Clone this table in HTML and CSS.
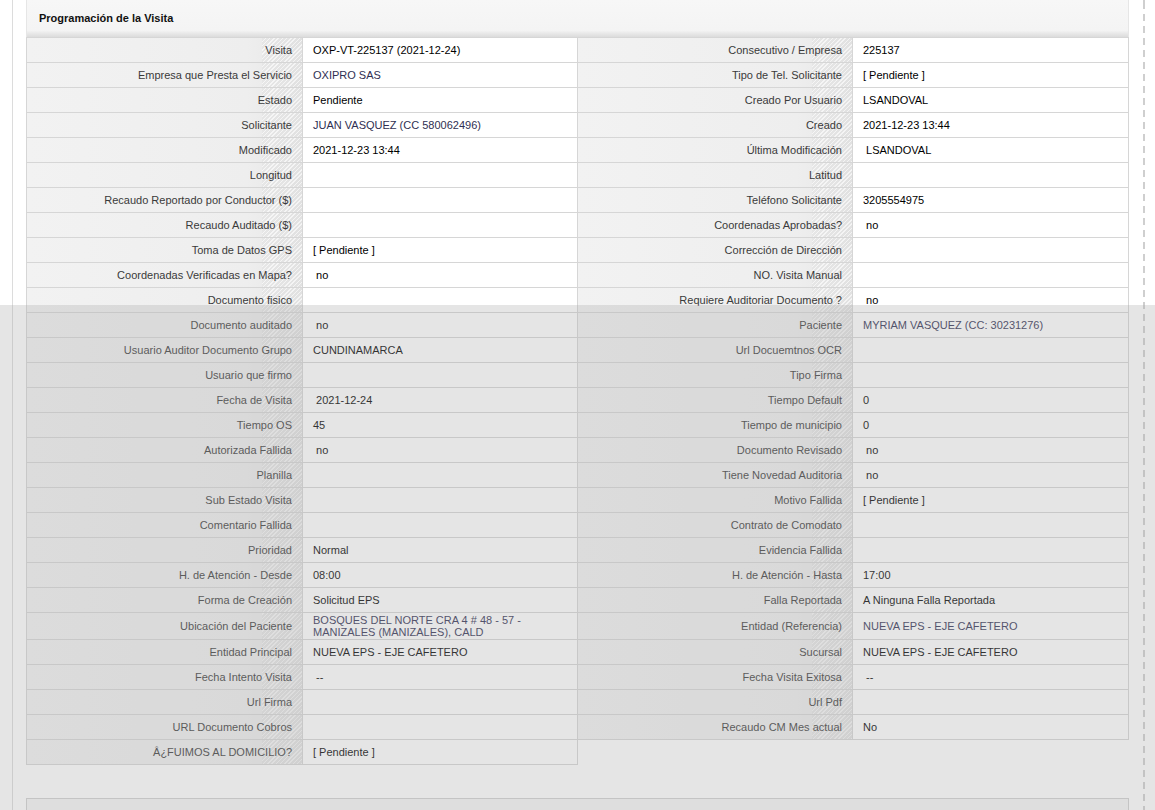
FILE: index.html
```html
<!DOCTYPE html>
<html lang="es">
<head>
<meta charset="utf-8">
<title>Programación de la Visita</title>
<link rel="stylesheet" href="styles.css">
</head>
<body>
<div class="page">
  <div class="main">
    <div class="panel-head">Programación de la Visita</div>
    <div class="grid">
      <div class="lbl">Visita</div><div class="val">OXP-VT-225137 (2021-12-24)</div>
      <div class="lbl">Consecutivo / Empresa</div><div class="val">225137</div>

      <div class="lbl">Empresa que Presta el Servicio</div><div class="val link">OXIPRO SAS</div>
      <div class="lbl">Tipo de Tel. Solicitante</div><div class="val">[ Pendiente ]</div>

      <div class="lbl">Estado</div><div class="val">Pendiente</div>
      <div class="lbl">Creado Por Usuario</div><div class="val">LSANDOVAL</div>

      <div class="lbl">Solicitante</div><div class="val link">JUAN VASQUEZ (CC 580062496)</div>
      <div class="lbl">Creado</div><div class="val">2021-12-23 13:44</div>

      <div class="lbl">Modificado</div><div class="val">2021-12-23 13:44</div>
      <div class="lbl">Última Modificación</div><div class="val pre"> LSANDOVAL</div>

      <div class="lbl">Longitud</div><div class="val"></div>
      <div class="lbl">Latitud</div><div class="val"></div>

      <div class="lbl">Recaudo Reportado por Conductor ($)</div><div class="val"></div>
      <div class="lbl">Teléfono Solicitante</div><div class="val">3205554975</div>

      <div class="lbl">Recaudo Auditado ($)</div><div class="val"></div>
      <div class="lbl">Coordenadas Aprobadas?</div><div class="val pre"> no</div>

      <div class="lbl">Toma de Datos GPS</div><div class="val">[ Pendiente ]</div>
      <div class="lbl">Corrección de Dirección</div><div class="val"></div>

      <div class="lbl">Coordenadas Verificadas en Mapa?</div><div class="val pre"> no</div>
      <div class="lbl">NO. Visita Manual</div><div class="val"></div>

      <div class="lbl">Documento fisico</div><div class="val"></div>
      <div class="lbl">Requiere Auditoriar Documento ?</div><div class="val pre"> no</div>

      <div class="lbl">Documento auditado</div><div class="val pre"> no</div>
      <div class="lbl">Paciente</div><div class="val link">MYRIAM VASQUEZ (CC: 30231276)</div>

      <div class="lbl">Usuario Auditor Documento Grupo</div><div class="val">CUNDINAMARCA</div>
      <div class="lbl">Url Docuemtnos OCR</div><div class="val"></div>

      <div class="lbl">Usuario que firmo</div><div class="val"></div>
      <div class="lbl">Tipo Firma</div><div class="val"></div>

      <div class="lbl">Fecha de Visita</div><div class="val pre"> 2021-12-24</div>
      <div class="lbl">Tiempo Default</div><div class="val">0</div>

      <div class="lbl">Tiempo OS</div><div class="val">45</div>
      <div class="lbl">Tiempo de municipio</div><div class="val">0</div>

      <div class="lbl">Autorizada Fallida</div><div class="val pre"> no</div>
      <div class="lbl">Documento Revisado</div><div class="val pre"> no</div>

      <div class="lbl">Planilla</div><div class="val"></div>
      <div class="lbl">Tiene Novedad Auditoria</div><div class="val pre"> no</div>

      <div class="lbl">Sub Estado Visita</div><div class="val"></div>
      <div class="lbl">Motivo Fallida</div><div class="val">[ Pendiente ]</div>

      <div class="lbl">Comentario Fallida</div><div class="val"></div>
      <div class="lbl">Contrato de Comodato</div><div class="val"></div>

      <div class="lbl">Prioridad</div><div class="val">Normal</div>
      <div class="lbl">Evidencia Fallida</div><div class="val"></div>

      <div class="lbl">H. de Atención - Desde</div><div class="val">08:00</div>
      <div class="lbl">H. de Atención - Hasta</div><div class="val">17:00</div>

      <div class="lbl">Forma de Creación</div><div class="val">Solicitud EPS</div>
      <div class="lbl">Falla Reportada</div><div class="val">A Ninguna Falla Reportada</div>

      <div class="lbl">Ubicación del Paciente</div><div class="val link">BOSQUES DEL NORTE CRA 4 # 48 - 57 -<br>MANIZALES (MANIZALES), CALD</div>
      <div class="lbl">Entidad (Referencia)</div><div class="val link">NUEVA EPS - EJE CAFETERO</div>

      <div class="lbl">Entidad Principal</div><div class="val">NUEVA EPS - EJE CAFETERO</div>
      <div class="lbl">Sucursal</div><div class="val">NUEVA EPS - EJE CAFETERO</div>

      <div class="lbl">Fecha Intento Visita</div><div class="val pre"> --</div>
      <div class="lbl">Fecha Visita Exitosa</div><div class="val pre"> --</div>

      <div class="lbl">Url Firma</div><div class="val"></div>
      <div class="lbl">Url Pdf</div><div class="val"></div>

      <div class="lbl">URL Documento Cobros</div><div class="val"></div>
      <div class="lbl">Recaudo CM Mes actual</div><div class="val">No</div>

      <div class="lbl">Â¿FUIMOS AL DOMICILIO?</div><div class="val">[ Pendiente ]</div>
    </div>
    <div class="panel-next"></div>
  </div>
  <div class="dash"></div>
</div>
<div class="overlay"></div>
</body>
</html>
```

FILE: styles.css
```css
* { box-sizing: border-box; }
html, body { margin: 0; padding: 0; }
body {
  background: #ffffff;
  font-family: "Liberation Sans", Arial, sans-serif;
  font-size: 11px;
  color: #000;
  overflow: hidden;
  height: 810px;
}
.page {
  display: flex;
  margin-left: 12px;
  border-left: 1px solid #dcdcdc;
  padding-left: 13px;
  height: 810px;
  overflow: hidden;
}
.main {
  width: 1103px;
  flex: none;
}
.panel-head {
  height: 37px;
  padding: 12px 0 0 12px;
  font-weight: bold;
  color: #111;
  background: linear-gradient(to bottom, #f7f7f7 0, #f4f4f4 82%, #e6e6e6 92%, #dcdcdc 100%);
  border-left: 1px solid #e6e6e6;
  border-right: 1px solid #e6e6e6;
}
.grid {
  display: grid;
  grid-template-columns: 276px 275px 275px 276px;
  border-left: 1px solid #d6d6d6;
  border-top: 1px solid #d6d6d6;
  width: 1103px;
}
.lbl, .val {
  min-height: 25px;
  padding: 1px 10px;
  line-height: 12px;
  display: flex;
  align-items: center;
  border-right: 1px solid #d6d6d6;
  border-bottom: 1px solid #d6d6d6;
}
.lbl {
  justify-content: flex-end;
  text-align: right;
  color: #3a3a3a;
  background:
    repeating-linear-gradient(-45deg, rgba(255,255,255,0.55) 0 1px, rgba(0,0,0,0.025) 1px 3px) right top / 40px 100% no-repeat,
    linear-gradient(to right, #f2f2f2 0%, #eeeeee 80%, #e6e6e6 100%);
}
.val {
  background: #fff;
  color: #000;
}
.val.link { color: #2f2f52; }
.val.pre { white-space: pre; }
.panel-next {
  margin-top: 33px;
  height: 12px;
  border: 1px solid #d0d0d0;
  border-bottom: 0;
  background: #f5f5f5;
}
.dash {
  flex: none;
  width: 2px;
  margin-left: 14px;
  height: 810px;
  background: repeating-linear-gradient(to bottom, #cfcfcf 0 7px, transparent 7px 12px);
  background-position: 0 2px;
}
.overlay {
  position: fixed;
  left: 0;
  right: 0;
  top: 305px;
  bottom: 0;
  background: #aaaaaa;
  opacity: 0.3;
}
```
